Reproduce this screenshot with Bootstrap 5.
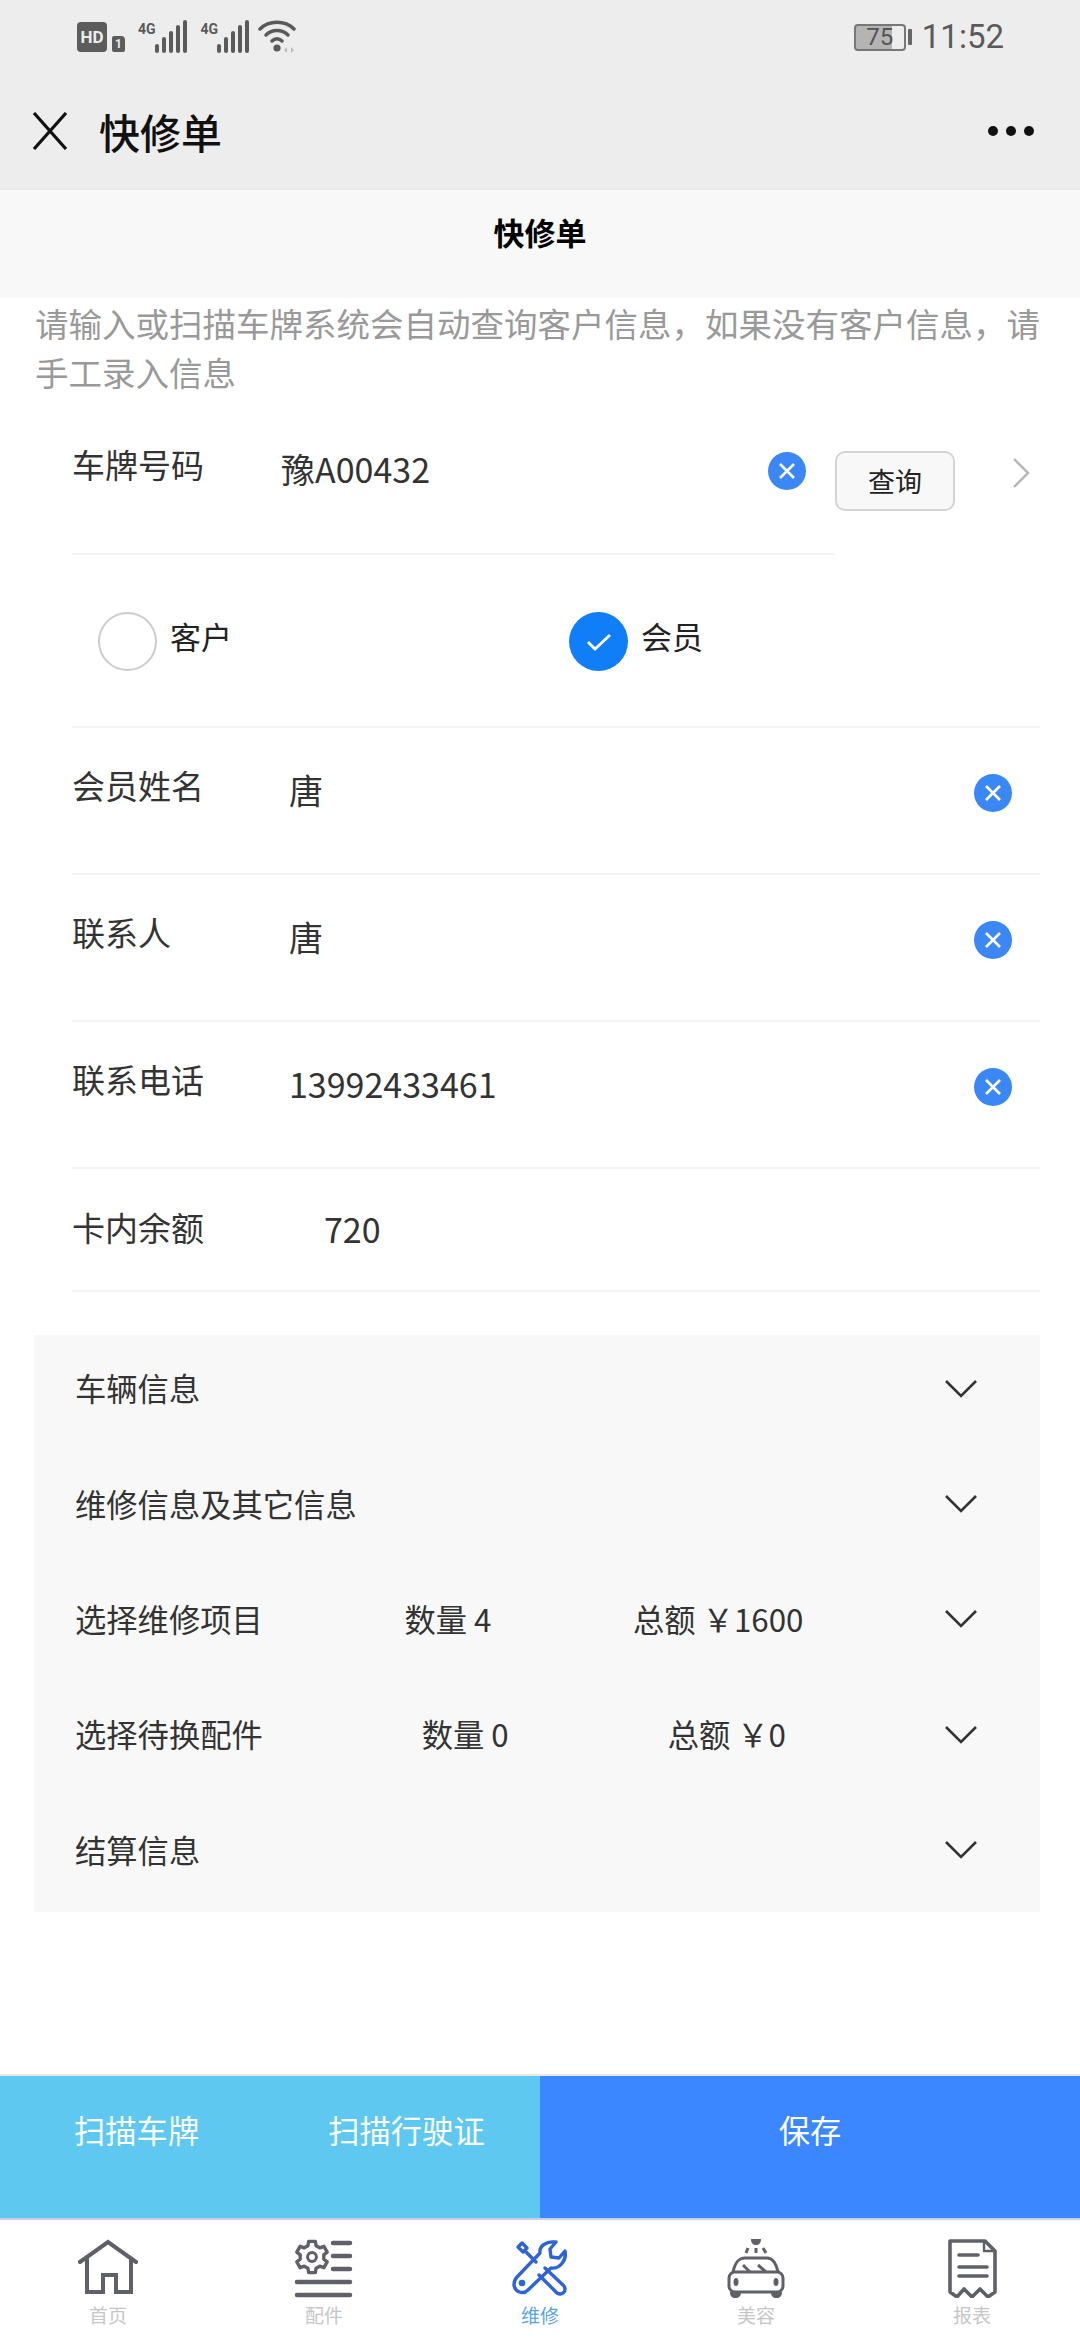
<!DOCTYPE html>
<html lang="zh-CN">
<head>
  <meta charset="UTF-8">
  <meta name="viewport" content="width=device-width, initial-scale=1.0">
  <title>快修单</title>
  <link href="https://cdn.jsdelivr.net/npm/bootstrap@5.3.1/dist/css/bootstrap.min.css" rel="stylesheet">
  <style>
    html, body { margin: 0; background: #fff; }
    body { font-family: "Noto Sans CJK SC", "Liberation Sans", sans-serif; color: #333; }
    .page-wrap { width: 1080px; height: 2340px; overflow: hidden; }

    /* status bar and title bar */
    .top-head { height: 190px; background: #ededed; border-bottom: 2px solid #e8e8e8; }
    .status-line { height: 74px; padding: 0 76px 0 77px; color: #5a5a5a; }
    .hd-tag { width: 30px; height: 30px; background: #5c5c5c; color: #ededed; border-radius: 4px; font: 700 17px/30px "Roboto", sans-serif; text-align: center; }
    .sim-tag { width: 13px; height: 16px; margin: 14px 0 0 5px; background: #5c5c5c; color: #ededed; border-radius: 2px 4px 2px 2px; font: 700 12px/16px "Roboto", sans-serif; text-align: center; }
    .net-tag { font: 700 14px/14px "Roboto", sans-serif; margin: -16px -1px 0 13px; }
    .batt-box { width: 52px; height: 27px; border: 2px solid #777; border-radius: 4px; font: 400 24px/23px "Roboto", sans-serif; color: #555; text-align: center; background: linear-gradient(to right, #b4b4b4 75%, transparent 75%); }
    .batt-tip { width: 4px; height: 16px; background: #666; margin: 0 10px 0 2px; border-radius: 1px; }
    .clock-text { font: 400 33px/40px "Roboto", sans-serif; color: #5a5a5a; }
    .title-line { height: 114px; padding: 0 46px 0 32px; }
    .title-text { font-size: 41px; line-height: 56px; font-weight: 500; color: #111; margin-left: 31px; }
    .more-dot { width: 10px; height: 10px; border-radius: 50%; background: #111; }

    .sub-head { height: 108px; background: #f8f8f8; font-size: 31px; line-height: 44px; font-weight: 700; color: #000; padding-top: 20px; }
    .hint-text { padding: 0 26px 0 35px; font-size: 33.5px; line-height: 49px; color: #999; height: 102px; }

    /* form rows */
    .form-area { padding-left: 72px; padding-right: 40px; }
    .form-row { border-bottom: 2px solid #f3f3f3; }
    .row-plate { height: 155px; width: 762px; padding-top: 40px; }
    .row-radio { height: 173px; }
    .row-field { height: 147px; padding-top: 33px; }
    .row-last { height: 123px; padding-top: 34px; }
    .field-label { width: 203px; flex-shrink: 0; font-size: 33px; line-height: 48px; color: #333; }
    .plate-value { margin: 5px 0 0 6px; }
    .field-value { font-size: 34px; line-height: 48px; color: #333; margin-top: 5px; }
    .value-plain { margin-left: 14px; }
    .value-money { margin-left: 49px; margin-top: 2px; }
    .clear-dot { width: 38px; height: 38px; flex-shrink: 0; }
    .plate-clear { margin: 12px 28px 0 0; }
    .field-clear { margin: 13px 28px 0 0; }
    .query-btn { left: 835px; top: 451px; width: 120px; height: 60px; padding: 0; background: #f8f8f8; border: 2px solid #d4d4d4; border-radius: 10px; font-size: 27px; line-height: 54px; color: #222; }
    .query-btn:hover { background: #f8f8f8; border-color: #d4d4d4; color: #222; }
    .row-arrow { left: 1012px; top: 458px; }
    .radio-item { width: 471px; padding-left: 26px; gap: 13px; padding-top: 2px; }
    .radio-off, .radio-on { width: 59px; height: 59px; border-radius: 50%; }
    .radio-off { border: 2px solid #ccc; }
    .radio-on { background: #0f7ef7; }
    .radio-label { font-size: 31px; line-height: 44px; color: #222; margin-top: -12px; }

    /* collapsed sections */
    .fold-panel { margin: 43px 40px 0 34px; height: 577px; background: #f8f8f8; }
    .fold-item { height: 115.4px; padding: 0 63px 8px 41px; background: transparent; border: 0; font-size: 31.3px; color: #333; }
    .fold-arrow { width: 32px; height: 18px; }

    /* bottom buttons and tabs */
    .action-bar { height: 146px; border-top: 2px solid #e9e9e9; border-bottom: 2px solid #c8cfe4; color: #fff; font-size: 31.3px; }
    .action-scan { width: 540px; background: #5ec8f0; padding-bottom: 34px; }
    .action-scan span:first-child { margin-left: 74px; }
    .action-scan span:last-child { margin-left: 129px; }
    .action-save { width: 540px; background: #3a87ff; padding-bottom: 34px; }
    .tab-bar { height: 120px; }
    .tab-item { width: 216px; font-size: 19px; line-height: 24px; color: #c6c6c6; padding-top: 18px; }
    .tab-item svg { display: block; margin-bottom: 5px; }
    .tab-on { color: #5aa5e0; }
  </style>
</head>
<body>
  <div class="page-wrap d-flex flex-column position-relative">
    <div class="top-head">
      <div class="status-line d-flex align-items-center">
        <div class="hd-tag">HD</div>
        <div class="sim-tag">1</div>
        <span class="net-tag">4G</span>
        <svg width="33" height="34" viewBox="0 0 33 34"><g fill="#5a5a5a"><rect x="0" y="24" width="4" height="9" rx="2"/><rect x="7" y="17" width="4" height="16" rx="2"/><rect x="14" y="11" width="4" height="22" rx="2"/><rect x="21" y="5" width="4" height="28" rx="2"/><rect x="28" y="0" width="4" height="33" rx="2"/></g></svg>
        <span class="net-tag">4G</span>
        <svg width="33" height="34" viewBox="0 0 33 34"><g fill="#5a5a5a"><rect x="0" y="24" width="4" height="9" rx="2"/><rect x="7" y="17" width="4" height="16" rx="2"/><rect x="14" y="11" width="4" height="22" rx="2"/><rect x="21" y="5" width="4" height="28" rx="2"/><rect x="28" y="0" width="4" height="33" rx="2"/></g></svg>
        <svg class="ms-2" width="40" height="34" viewBox="0 0 40 34"><g fill="none" stroke="#5a5a5a" stroke-width="3.5" stroke-linecap="round"><path d="M2 9C11 0 27 0 36 9"/><path d="M8 15C14 9 24 9 30 15"/><path d="M14 21C17 18 21 18 24 21"/></g><circle cx="19" cy="28" r="3.6" fill="#5a5a5a"/><path d="M29 27l-3 3 3 3zM33 27l3 3-3 3z" fill="#bbb"/></svg>
        <div class="batt-box ms-auto">75</div>
        <div class="batt-tip"></div>
        <div class="clock-text">11:52</div>
      </div>
      <div class="title-line d-flex align-items-center">
        <svg width="36" height="38" viewBox="0 0 36 38"><path d="M2 1L34 37M34 1L2 37" stroke="#111" stroke-width="3.2" fill="none"/></svg>
        <div class="title-text">快修单</div>
        <div class="ms-auto d-flex gap-2">
          <span class="more-dot"></span><span class="more-dot"></span><span class="more-dot"></span>
        </div>
      </div>
    </div>
    <div class="sub-head text-center">快修单</div>
    <div class="hint-text">请输入或扫描车牌系统会自动查询客户信息，如果没有客户信息，请手工录入信息</div>

    <div class="form-area">
      <div class="form-row row-plate d-flex">
        <div class="field-label">车牌号码</div>
        <div class="field-value plate-value flex-grow-1">豫A00432</div>
        <svg class="clear-dot plate-clear" viewBox="0 0 38 38"><circle cx="19" cy="19" r="19" fill="#3a87f5"/><path d="M12 12L26 26M26 12L12 26" stroke="#fff" stroke-width="2.6"/></svg>
      </div>
      <div class="form-row row-radio d-flex align-items-center">
        <div class="radio-item d-flex align-items-center">
          <span class="radio-off"></span><span class="radio-label">客户</span>
        </div>
        <div class="radio-item d-flex align-items-center">
          <span class="radio-on d-flex align-items-center justify-content-center">
            <svg width="26" height="20" viewBox="0 0 26 20"><path d="M2 10L9 17L24 3" stroke="#fff" stroke-width="2.8" fill="none"/></svg>
          </span><span class="radio-label">会员</span>
        </div>
      </div>
      <div class="form-row row-field d-flex">
        <div class="field-label">会员姓名</div>
        <div class="field-value value-plain flex-grow-1">唐</div>
        <svg class="clear-dot field-clear" viewBox="0 0 38 38"><circle cx="19" cy="19" r="19" fill="#3a87f5"/><path d="M12 12L26 26M26 12L12 26" stroke="#fff" stroke-width="2.6"/></svg>
      </div>
      <div class="form-row row-field d-flex">
        <div class="field-label">联系人</div>
        <div class="field-value value-plain flex-grow-1">唐</div>
        <svg class="clear-dot field-clear" viewBox="0 0 38 38"><circle cx="19" cy="19" r="19" fill="#3a87f5"/><path d="M12 12L26 26M26 12L12 26" stroke="#fff" stroke-width="2.6"/></svg>
      </div>
      <div class="form-row row-field d-flex">
        <div class="field-label">联系电话</div>
        <div class="field-value value-plain flex-grow-1">13992433461</div>
        <svg class="clear-dot field-clear" viewBox="0 0 38 38"><circle cx="19" cy="19" r="19" fill="#3a87f5"/><path d="M12 12L26 26M26 12L12 26" stroke="#fff" stroke-width="2.6"/></svg>
      </div>
      <div class="form-row row-last d-flex">
        <div class="field-label">卡内余额</div>
        <div class="field-value value-money">720</div>
      </div>
    </div>

    <!-- sits over the end of the plate row, the divider stops before it -->
    <button type="button" class="btn query-btn position-absolute">查询</button>
    <svg class="row-arrow position-absolute" width="18" height="30" viewBox="0 0 18 30"><path d="M2 1L16 15L2 29" stroke="#b5b5b5" stroke-width="2.4" fill="none"/></svg>

    <div class="fold-panel list-group rounded-0">
      <div class="list-group-item fold-item d-flex align-items-center justify-content-between">
        <span>车辆信息</span>
        <svg class="fold-arrow" viewBox="0 0 32 18"><path d="M1 1L16 16L31 1" stroke="#333" stroke-width="2.6" fill="none"/></svg>
      </div>
      <div class="list-group-item fold-item d-flex align-items-center justify-content-between">
        <span>维修信息及其它信息</span>
        <svg class="fold-arrow" viewBox="0 0 32 18"><path d="M1 1L16 16L31 1" stroke="#333" stroke-width="2.6" fill="none"/></svg>
      </div>
      <div class="list-group-item fold-item d-flex align-items-center justify-content-between">
        <span>选择维修项目</span><span>数量 4</span><span>总额 ￥1600</span>
        <svg class="fold-arrow" viewBox="0 0 32 18"><path d="M1 1L16 16L31 1" stroke="#333" stroke-width="2.6" fill="none"/></svg>
      </div>
      <div class="list-group-item fold-item d-flex align-items-center justify-content-between">
        <span>选择待换配件</span><span>数量 0</span><span>总额 ￥0</span>
        <svg class="fold-arrow" viewBox="0 0 32 18"><path d="M1 1L16 16L31 1" stroke="#333" stroke-width="2.6" fill="none"/></svg>
      </div>
      <div class="list-group-item fold-item d-flex align-items-center justify-content-between">
        <span>结算信息</span>
        <svg class="fold-arrow" viewBox="0 0 32 18"><path d="M1 1L16 16L31 1" stroke="#333" stroke-width="2.6" fill="none"/></svg>
      </div>
    </div>

    <div class="mt-auto">
      <div class="action-bar d-flex">
        <div class="action-scan d-flex align-items-center"><span>扫描车牌</span><span>扫描行驶证</span></div>
        <div class="action-save d-flex align-items-center justify-content-center">保存</div>
      </div>
      <div class="tab-bar d-flex">
        <div class="tab-item d-flex flex-column align-items-center">
          <svg width="60" height="60" viewBox="0 0 60 60"><g fill="none" stroke="#5f6068" stroke-width="4"><path d="M2 24L30 4L58 24" stroke-linecap="round"/><path d="M9 19V54H25V37H38V54H53V19"/></g></svg>
          <span>首页</span>
        </div>
        <div class="tab-item d-flex flex-column align-items-center">
          <svg width="60" height="60" viewBox="0 0 60 60"><polygon points="13.9,7.7 14.7,3.4 21.3,3.4 22.1,7.7 25.7,9.8 29.9,8.3 33.2,14.1 29.8,16.9 29.8,21.1 33.2,23.9 29.9,29.7 25.7,28.2 22.1,30.3 21.3,34.6 14.7,34.6 13.9,30.3 10.3,28.2 6.1,29.7 2.8,23.9 6.2,21.1 6.2,16.9 2.8,14.1 6.1,8.3 10.3,9.8" fill="none" stroke="#5f6068" stroke-width="3.4" stroke-linejoin="round"/><circle cx="18" cy="19" r="4.4" fill="none" stroke="#5f6068" stroke-width="3"/><path d="M39 5H56M39 18H56M39 31H56M3 44H56M3 57H56" stroke="#5f6068" stroke-width="4.5" stroke-linecap="round"/></svg>
          <span>配件</span>
        </div>
        <div class="tab-item tab-on d-flex flex-column align-items-center">
          <svg width="60" height="60" viewBox="0 0 60 60"><g fill="none" stroke="#2f63d6" stroke-width="3.4" stroke-linejoin="round" stroke-linecap="round"><path d="M30 15C29 8 36 3 46 4L40 11L41 19L49 20L55 13C57 22 50 31 41 30L18 52C13 57 5 54 4 47C4 44 5 41 7 39Z"/><circle cx="12" cy="45" r="1.6"/><path d="M8 9L12 5L17 10L13 14ZM15 13L26 24"/><path d="M35 30L54 48C57 53 52 58 47 55L29 37"/></g></svg>
          <span>维修</span>
        </div>
        <div class="tab-item d-flex flex-column align-items-center">
          <svg width="60" height="60" viewBox="0 0 60 60"><path d="M25 1H35C35 5 33 7 30 7S25 5 25 1Z" fill="#5f6068"/><g fill="none" stroke="#5f6068" stroke-width="3"><path d="M30 10V15M22 10L20 15M37 10L40 15"/><path d="M7 34C9 25 12 20 19 20H41C47 20 50 25 52 34"/><rect x="3" y="34" width="54" height="20" rx="6"/><path d="M17 27L24 34M32 27L40 34"/></g><ellipse cx="10" cy="44" rx="2.5" ry="4" fill="#5f6068"/><ellipse cx="50" cy="44" rx="2.5" ry="4" fill="#5f6068"/><path d="M4 54H15C15 58 13 60 9.500 60S4 58 4 54ZM45 54H56C56 58 54 60 50.500 60S45 58 45 54Z" fill="#5f6068"/></svg>
          <span>美容</span>
        </div>
        <div class="tab-item d-flex flex-column align-items-center">
          <svg width="60" height="60" viewBox="0 0 60 60"><g fill="none" stroke="#5f6068" stroke-width="3.6" stroke-linejoin="round"><path d="M8 3H43L53 13V54L46 59L38 51L30 59L22 51L15 59L8 54Z"/><path d="M42 4V13H52" stroke-width="2.4"/><path d="M17 17H36M17 29H45M17 38H45" stroke-linecap="round"/></g></svg>
          <span>报表</span>
        </div>
      </div>
    </div>
  </div>
  <script src="https://cdn.jsdelivr.net/npm/bootstrap@5.3.1/dist/js/bootstrap.bundle.min.js"></script>
</body>
</html>
